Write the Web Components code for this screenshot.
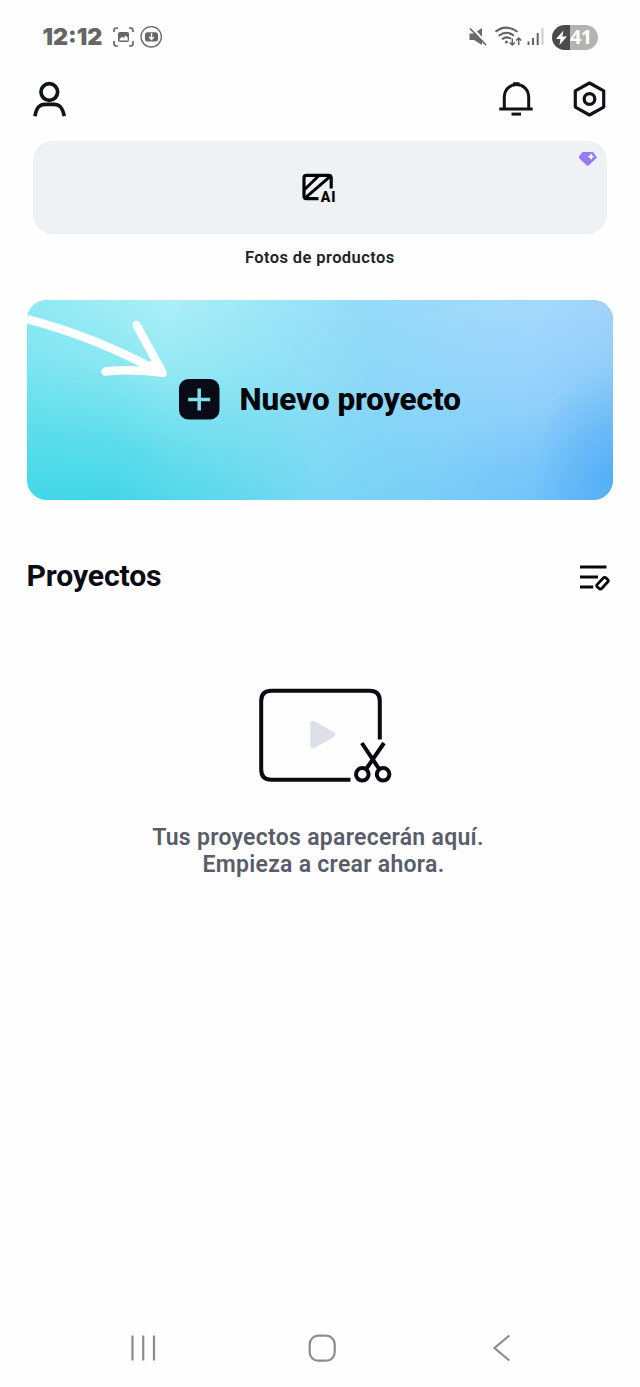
<!DOCTYPE html>
<html lang="es">
<head>
<meta charset="utf-8">
<title>Proyectos</title>
<style>
html,body{margin:0;background:#fefefe}
body{font-family:Roboto,"Liberation Sans",sans-serif;color:#0a0c14}
</style>
</head>
<body>
<app-screen></app-screen>
<script>
const define = (name, html) => {
  const t = document.createElement('template');
  t.innerHTML = html;
  customElements.define(name, class extends HTMLElement {
    constructor() {
      super();
      this.attachShadow({ mode: 'open' }).append(t.content.cloneNode(true));
    }
  });
};

define('status-bar', `
<style>
:host{display:flex;height:74px;box-sizing:border-box;padding:0 42px 0 42.500px;align-items:center;color:#666}
.time{font:900 23.300px/28px Inter,sans-serif;width:70.500px;white-space:nowrap;letter-spacing:0}
svg{display:block;flex:none}
.left{margin-right:auto}
.battery{display:flex;align-items:center;width:46px;height:25px;border-radius:13px;background:linear-gradient(90deg,#4b4b4b 18px,#b3b3b3 18px);margin-left:8px;color:#fff}
.battery b{font:700 20px/25px "Open Sans",sans-serif;letter-spacing:-.8px;position:relative;top:-.5px;left:-1px}
</style>
<div class="time">12:12</div>
<svg class="left" width="50" height="24" viewBox="113 25 50 24" fill="none" stroke="#666" stroke-width="1.7">
  <path d="M114 32V30Q114 28 116.500 28H118M129 28H130.500Q133 28 133 30.500V32M133 41V43.500Q133 46 130.500 46H129M118 46H116.500Q114 46 114 43.500V41"/>
  <rect x="118" y="32" width="11" height="10" rx="2" fill="#666" stroke="none"/>
  <path d="M119.500 39.500L122 36.500L123.500 38L125.500 35.500L127.700 37.500V40.500H119.500Z" fill="#fff" stroke="none"/>
  <circle cx="151.200" cy="36.800" r="10.200" stroke-width="1.300"/>
  <rect x="145" y="32.300" width="13" height="9.200" rx="2.500" fill="#666" stroke="none"/>
  <path d="M151.500 33V39M149.200 37L151.500 39.500L153.800 37" stroke="#fff" stroke-width="1.400"/>
</svg>
<svg width="76" height="26" viewBox="468 24 76 26" fill="none" stroke="#626262" stroke-width="2">
  <path d="M469.500 33.500H474L482 28V45L474 40H469.500Z" fill="#6a6a6a" stroke="none"/>
  <path d="M471.500 28L487.500 44.500" stroke="#fefefe" stroke-width="3"/>
  <path d="M470 28.500L486 45" stroke-width="1.700"/>
  <path d="M495.500 31.800Q506 23.500 517.500 31.800M498.700 35.800Q506.500 29.700 514 35.800M502 39.300Q506.500 35.700 511 38.800"/>
  <circle cx="506.500" cy="42" r="1.500" fill="#626262" stroke="none"/>
  <path d="M512.300 38.500V45M509.700 42.500L512.300 45L515 42.500M518.700 45V38M516.200 40.500L518.700 38L521.300 40.500" stroke-width="1.500"/>
  <path d="M528.500 41.500V45M533 38V45M537.700 33V45"/>
  <path d="M542.500 28V45" stroke="#ccc"/>
</svg>
<div class="battery">
  <svg width="19" height="25" viewBox="552 24 19 25"><path d="M563.500 29.500L556 38H560.500L559.500 44L567 35.500H562.300Z" fill="#fff"/></svg><b>41</b>
</div>`);

define('top-actions', `
<style>
:host{display:flex;height:66.500px;box-sizing:border-box;padding:5px 34px 0 33px;align-items:flex-start}
svg{display:block;fill:none;stroke:#121318;stroke-width:3.7}
.user{margin-right:auto}
.bell{margin-right:39px}
</style>
<svg class="user" width="33" height="40" viewBox="33 79 33 40"><circle cx="49.300" cy="92" r="8.300"/><path d="M35 116.200C36.300 108 39 104.300 45 104.300H54C60 104.300 62.700 108 64.200 116.200"/></svg>
<svg class="bell" width="35" height="40" viewBox="499 79 35 40"><path style="stroke-width:3" d="M504.300 108V97.500C504.300 80.300 528.700 80.300 528.700 97.500V108M513 83.700H519.500"/><path d="M499.300 108.900H532.700" style="stroke-width:3"/><path d="M511.500 114.100H521" style="stroke-width:3"/></svg>
<svg width="33" height="40" viewBox="573 79 33 40"><path d="M589.500 83L603.700 90.900V107.100L589.500 115L575.300 107.100V90.900Z" stroke-linejoin="round" style="stroke-width:3.200"/><circle cx="589.500" cy="99" r="5.300" style="stroke-width:3.300"/></svg>`);

define('product-tool', `
<style>
:host{display:block;padding:0 33.500px 0 33px}
.card{position:relative;display:grid;place-items:center;height:93.500px;border-radius:20px;background:#eef2f5}
svg{display:block}
.ai{margin-top:1.500px}
.gem{position:absolute;right:8.500px;top:9px}
.label{text-align:center;font:600 16.500px/24px Roboto,sans-serif;color:#202126;margin-top:11.500px;letter-spacing:.4px}
text{font:900 14px Roboto,sans-serif;letter-spacing:.9px}
</style>
<div class="card">
  <svg class="ai" width="38" height="36" viewBox="301 170 38 36" fill="none" stroke="#020406" stroke-width="3.200">
    <path d="M331.200 188.500V178Q331.200 175.300 328.500 175.300H306.500Q304 175.300 304 177.800V196Q304 198.600 306.500 198.600H318.500"/>
    <path d="M304 190L319 175.500M305 198.200L330.500 176.200" stroke-width="3"/>
    <text x="320.800" y="202" fill="#020406" stroke="none">AI</text>
  </svg>
  <svg class="gem" width="20" height="17" viewBox="579 150 20 17"><path d="M584 152H594L597.500 156.800Q598 157.500 597.300 158.200L589.500 165.500Q588.700 166.200 587.800 165.500L580.200 158.200Q579.500 157.500 580 156.800L583 152.500Q583.300 152 584 152Z" fill="#967bf5"/><path d="M592 153.300L593.100 155.600L595.400 156.700L593.100 157.800L592 160.100L590.900 157.800L588.600 156.700L590.900 155.600Z" fill="#fff"/></svg>
</div>
<div class="label"><slot></slot></div>`);

define('new-project', `
<style>
:host{display:flex;position:relative;box-sizing:border-box;height:199.500px;margin:30.500px 27px 0 26.500px;border-radius:20px;overflow:hidden;align-items:center;padding-left:152.500px;gap:19.500px;
background:linear-gradient(90deg,#43d8e8,#40d6e7 15%,#5bd9eb 34%,#76d7f2 50%,#75cbf8 72%,#66bcf9 90%,#58b2f7)}
:host::before{content:"";position:absolute;inset:0;background:linear-gradient(90deg,#97ebf4,#b3f0f8 24%,#9ee5f7 43%,#96daf8 58%,#a5d9fc 85%,#9fd3fa);-webkit-mask-image:linear-gradient(184deg,#000 5%,rgba(0,0,0,.72) 40%,rgba(0,0,0,.25) 75%,transparent);mask-image:linear-gradient(184deg,#000 5%,rgba(0,0,0,.72) 40%,rgba(0,0,0,.25) 75%,transparent)}
:host::after{content:"";position:absolute;inset:0;background:radial-gradient(ellipse 80px 115px at 100% 88%,rgba(70,168,244,.6),rgba(70,168,244,.3) 50%,rgba(70,168,244,0))}
.arrow{position:absolute;left:0;top:0}
.plus,.title{position:relative;z-index:1}
.title{font:800 31.400px/40px Roboto,sans-serif;color:#020306;white-space:nowrap;padding-top:1px}
svg{display:block;flex:none}
</style>
<svg class="arrow" width="150" height="90" viewBox="26.5 300.5 150 90" fill="none" stroke="#fff" stroke-width="8.300" stroke-linecap="round" stroke-linejoin="round"><path d="M22 318.500C70 330.500 112 347 157 371.500"/><path d="M136 325.500L162.300 373.500C144 370.500 124 370 104.800 372"/><path d="M151 366L160 371" stroke-width="9"/></svg>
<svg class="plus" width="41" height="41" viewBox="0 0 41 41"><rect width="40.500" height="40.500" rx="9.500" fill="#090c16"/><path d="M20.200 9.500V31.500M9.200 20.500H31.200" stroke="#83dfee" stroke-width="3.500"/></svg>
<div class="title"><slot></slot></div>`);

define('section-header', `
<style>
:host{display:flex;justify-content:space-between;align-items:center;height:40px;margin:56.500px 30.500px 0 26.500px}
.title{font:700 30.200px/40px Roboto,sans-serif;letter-spacing:-.15px}
svg{display:block;position:relative;top:2px}
</style>
<div class="title"><slot></slot></div>
<svg width="31" height="32" viewBox="579 562 31 32" fill="none" stroke="#07080c" stroke-width="3.200"><path d="M580 567H606.500M580 577H598M580 587H593.200"/><rect x="-3" y="-6.200" width="6" height="12.400" rx="1.800" transform="translate(602.500 583.200) rotate(43)" stroke-width="2.800"/></svg>`);

define('empty-state', `
<style>
:host{display:flex;flex-direction:column;align-items:center}
svg{display:block;margin:90px 0 0 12px}
.text{margin-top:38px;font:600 23px/27px Roboto,sans-serif;color:#595d69;text-align:center;letter-spacing:.28px}
::slotted(p){margin:0}
</style>
<svg width="136" height="100" viewBox="258 686 136 100" fill="none" stroke="#090b13" stroke-width="4">
  <path d="M379.800 739.500V701Q379.800 690.800 369.500 690.800H271.500Q261.200 690.800 261.200 701V769.500Q261.200 779.800 271.500 779.800H350.500"/>
  <path d="M313 723.500L332.500 734.500L313 745.500Z" fill="#dde0e6" stroke="#dde0e6" stroke-width="5.500" stroke-linejoin="round"/>
  <path d="M361.800 743L378.800 768.500M384 743L366.500 768.500"/><circle cx="362.300" cy="774.300" r="6.300"/><circle cx="383.100" cy="774.300" r="6.300"/>
</svg>
<div class="text"><slot></slot></div>`);

define('nav-bar', `
<style>
:host{display:flex;margin-top:auto;padding:0 129px 24px 130px}
svg{display:block}
.home{margin:0 154px 0 149px}
</style>
<svg width="28" height="30" viewBox="130 1333 28 30" fill="none" stroke="#8c8c8c" stroke-width="2.200"><path d="M132.500 1335.500V1360.500M143.200 1335.500V1360.500M154 1335.500V1360.500"/></svg>
<svg class="home" width="30" height="30" viewBox="307 1333 30 30" fill="none" stroke="#8c8c8c" stroke-width="2.200"><rect x="309.700" y="1335.700" width="25" height="25" rx="8.500"/></svg>
<svg width="20" height="30" viewBox="491 1333 20 30" fill="none" stroke="#8c8c8c" stroke-width="2.200"><path d="M509.300 1335.500L494.500 1348L509.300 1360.500"/></svg>`);

define('app-screen', `
<style>
:host{display:flex;flex-direction:column;height:1387px;overflow:hidden}
.one{padding-right:4px}
.two{padding-left:7px}
</style>
<status-bar></status-bar>
<top-actions></top-actions>
<product-tool>Fotos de productos</product-tool>
<new-project>Nuevo proyecto</new-project>
<section-header>Proyectos</section-header>
<empty-state><p class="one">Tus proyectos aparecerán aquí.</p><p class="two">Empieza a crear ahora.</p></empty-state>
<nav-bar></nav-bar>`);
</script>
</body>
</html>
